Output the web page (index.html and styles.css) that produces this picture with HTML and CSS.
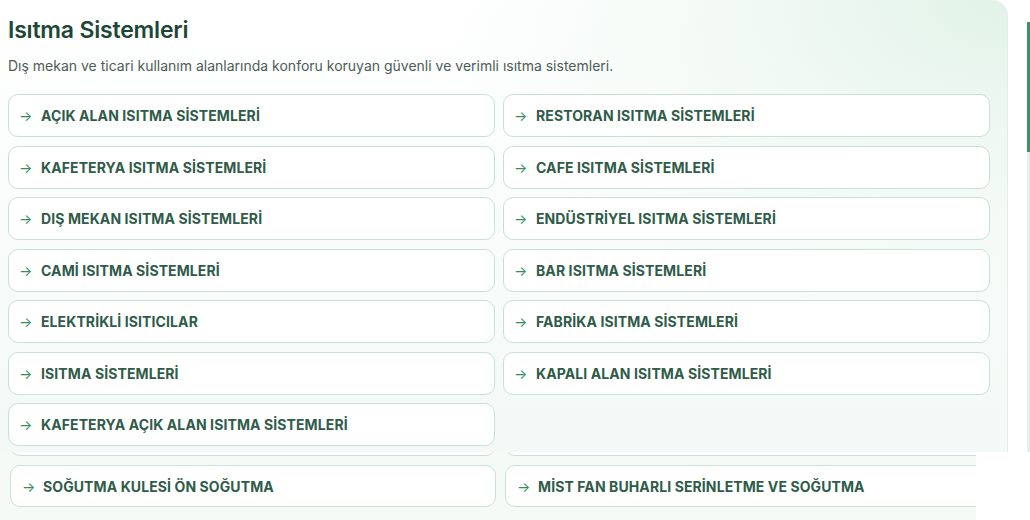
FILE: index.html
```html
<!DOCTYPE html>
<html lang="tr">
<head>
    <meta charset="UTF-8">
    <meta name="viewport" content="width=device-width, initial-scale=1.0">
    <title>Isıtma Sistemleri</title>
    <link rel="stylesheet" href="styles.css">
</head>
<body>
    <div class="page">
        <div class="top">
            <section class="panel">
                <h2>Isıtma Sistemleri</h2>
                <p class="lead">Dış mekan ve ticari kullanım alanlarında konforu koruyan güvenli ve verimli ısıtma sistemleri.</p>
                <div class="links">
                    <a class="link" href="#"><span class="arrow">→</span>AÇIK ALAN ISITMA SİSTEMLERİ</a>
                    <a class="link" href="#"><span class="arrow">→</span>RESTORAN ISITMA SİSTEMLERİ</a>
                    <a class="link" href="#"><span class="arrow">→</span>KAFETERYA ISITMA SİSTEMLERİ</a>
                    <a class="link" href="#"><span class="arrow">→</span>CAFE ISITMA SİSTEMLERİ</a>
                    <a class="link" href="#"><span class="arrow">→</span>DIŞ MEKAN ISITMA SİSTEMLERİ</a>
                    <a class="link" href="#"><span class="arrow">→</span>ENDÜSTRİYEL ISITMA SİSTEMLERİ</a>
                    <a class="link" href="#"><span class="arrow">→</span>CAMİ ISITMA SİSTEMLERİ</a>
                    <a class="link" href="#"><span class="arrow">→</span>BAR ISITMA SİSTEMLERİ</a>
                    <a class="link" href="#"><span class="arrow">→</span>ELEKTRİKLİ ISITICILAR</a>
                    <a class="link" href="#"><span class="arrow">→</span>FABRİKA ISITMA SİSTEMLERİ</a>
                    <a class="link" href="#"><span class="arrow">→</span>ISITMA SİSTEMLERİ</a>
                    <a class="link" href="#"><span class="arrow">→</span>KAPALI ALAN ISITMA SİSTEMLERİ</a>
                    <a class="link" href="#"><span class="arrow">→</span>KAFETERYA AÇIK ALAN ISITMA SİSTEMLERİ</a>
                </div>
            </section>
            <div class="side">
                <div class="track"><div class="thumb"></div></div>
            </div>
        </div>
        <section class="strip">
            <div class="links stub">
                <span class="link"></span>
                <span class="link"></span>
            </div>
            <div class="links">
                <a class="link" href="#"><span class="arrow">→</span>SOĞUTMA KULESİ ÖN SOĞUTMA</a>
                <a class="link" href="#"><span class="arrow">→</span>MİST FAN BUHARLI SERİNLETME VE SOĞUTMA</a>
            </div>
        </section>
    </div>
</body>
</html>
```

FILE: styles.css
```css
body {
    margin: 0;
    background: #ffffff;
    font-family: 'Inter', 'Noto Sans', sans-serif;
    color: #1f4a3a;
}
.page {
    width: 1030px;
    height: 520px;
    overflow: hidden;
}
.top {
    display: flex;
    height: 452px;
}
.panel {
    width: 1008px;
    box-sizing: border-box;
    padding: 15px 18px 0 8px;
    border-top-right-radius: 16px;
    border-right: 1px solid #e3eeea;
    background:
        radial-gradient(ellipse 560px 320px at 100% 0, #e1f2e8 0%, rgba(234, 246, 239, 0.65) 45%, rgba(255, 255, 255, 0) 100%),
        linear-gradient(180deg, #ffffff 0%, #f3f9f6 100%);
}
h2 {
    margin: 0;
    font-size: 23px;
    font-weight: 600;
    line-height: 30px;
    color: #1e4637;
    letter-spacing: -0.2px;
}
.lead {
    margin: 11px 0 18px;
    font-size: 14px;
    line-height: 20px;
    color: #4d5c57;
}
.links {
    display: grid;
    grid-template-columns: 487px 487px;
    column-gap: 8px;
    row-gap: 8.5px;
}
.link {
    display: flex;
    align-items: center;
    height: 43px;
    box-sizing: border-box;
    padding-left: 10px;
    background: #ffffff;
    border: 1px solid #c9e0d6;
    border-radius: 10px;
    text-decoration: none;
    font-size: 14px;
    font-weight: 700;
    color: #2f5b49;
    letter-spacing: 0.1px;
}
.arrow {
    width: 22px;
    font-size: 14px;
    font-weight: 400;
    color: #2f8f5e;
}
.side {
    flex: 1;
    display: flex;
    justify-content: flex-end;
    padding-top: 22px;
}
.track {
    width: 3px;
    background: #e9eeec;
}
.thumb {
    height: 130px;
    background: #2e9963;
}
.strip {
    width: 976px;
    height: 68px;
    overflow: hidden;
    box-sizing: border-box;
    padding-left: 10px;
    background: #f5faf7;
}
.strip .links {
    grid-template-columns: 486px 486px;
    column-gap: 9px;
}
.stub {
    margin-top: -39px;
    margin-bottom: 9px;
}
.strip .link {
    height: 42px;
    padding-left: 11px;
}
.strip .link .arrow {
    width: 21px;
}
.strip .stub .link {
    height: 43px;
}
```
